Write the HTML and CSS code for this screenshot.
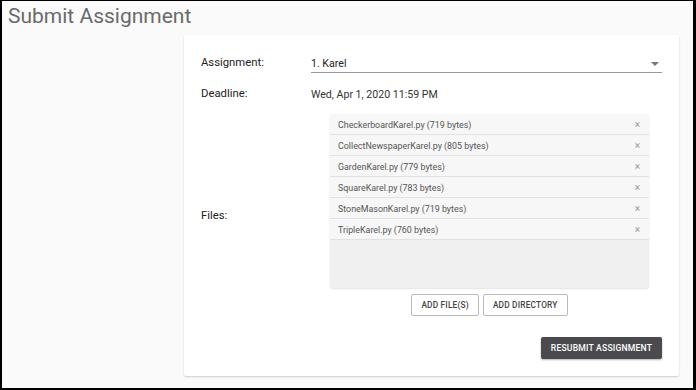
FILE: index.html
```html
<!DOCTYPE html>
<html>
<head>
  <link rel="stylesheet" href="styles.css">
</head>
<body>
<div class="frame">
  <h1 class="page-title">Submit Assignment</h1>

  <div class="card">
    <div class="form-row">
      <div class="label">Assignment:</div>
      <div class="select">
        <span>1. Karel</span>
        <span class="arrow"></span>
      </div>
    </div>

    <div class="form-row">
      <div class="label">Deadline:</div>
      <div class="value">Wed, Apr 1, 2020 11:59 PM</div>
    </div>

    <div class="form-row files-row">
      <div class="label">Files:</div>
      <div class="files">
        <div class="file-list">
          <div class="file-item"><span>CheckerboardKarel.py (719 bytes)</span><span class="remove">&times;</span></div>
          <div class="file-item"><span>CollectNewspaperKarel.py (805 bytes)</span><span class="remove">&times;</span></div>
          <div class="file-item"><span>GardenKarel.py (779 bytes)</span><span class="remove">&times;</span></div>
          <div class="file-item"><span>SquareKarel.py (783 bytes)</span><span class="remove">&times;</span></div>
          <div class="file-item"><span>StoneMasonKarel.py (719 bytes)</span><span class="remove">&times;</span></div>
          <div class="file-item"><span>TripleKarel.py (760 bytes)</span><span class="remove">&times;</span></div>
        </div>
        <div class="file-buttons">
          <button class="outline-button">Add file(s)</button>
          <button class="outline-button">Add directory</button>
        </div>
      </div>
    </div>

    <div class="actions">
      <button class="dark-button">Resubmit assignment</button>
    </div>
  </div>
</div>
</body>
</html>
```

FILE: styles.css
```css
/* reset */
* {
  margin: 0;
  padding: 0;
  box-sizing: border-box;
}

body {
  width: 696px;
  height: 390px;
  background-color: #000;
  font-family: Roboto, "Liberation Sans", sans-serif;
  color: #333;
}

/* light page inside the black screenshot edge */
.frame {
  margin: 1px 3px 2px 2px;
  height: 387px;
  background-color: #fafafa;
  overflow: hidden;
}

.page-title {
  font-size: 21px;
  font-weight: 400;
  color: #6a6a6a;
  line-height: 28px;
  padding: 1px 0 0 6px;
  height: 34px;
}

/* white card with the form */
.card {
  margin-left: 182px;
  width: 495px;
  background-color: #fff;
  padding: 17px;
  border-radius: 2px;
  box-shadow: 0 1px 2px rgba(0, 0, 0, 0.18);
}

.form-row {
  display: flex;
  align-items: center;
  min-height: 21px;
  margin-bottom: 10px;
}

.label {
  width: 110px;
  font-size: 11.3px;
  color: #222;
  flex-shrink: 0;
}

.value {
  font-size: 10.6px;
  color: #333;
  padding-top: 1px;
}

.select {
  flex: 1;
  height: 21px;
  display: flex;
  justify-content: space-between;
  align-items: flex-end;
  padding-bottom: 2px;
  font-size: 10.6px;
  color: #222;
  border-bottom: 1px solid #999;
}

.arrow {
  width: 0;
  height: 0;
  margin: 0 3px 4px 0;
  border-left: 4px solid transparent;
  border-right: 4px solid transparent;
  border-top: 4px solid #777;
}

/* file list */
.files-row {
  margin-bottom: 21px;
}

.files {
  flex: 1;
  padding: 0 13px 0 19px;
}

.file-list {
  height: 174px;
  background-color: #f0f0f0;
  border-radius: 3px;
  box-shadow: 0 1px 2px rgba(0, 0, 0, 0.12);
  overflow: hidden;
}

.file-item {
  height: 21px;
  display: flex;
  justify-content: space-between;
  align-items: center;
  padding: 1px 9px 0 8px;
  font-size: 8.9px;
  color: #555;
  background-color: #f7f7f7;
  border-bottom: 1px solid #e2e2e2;
}

.remove {
  font-size: 10px;
  color: #999;
}

.file-buttons {
  display: flex;
  justify-content: center;
  gap: 4px;
  margin-top: 6px;
}

.outline-button {
  height: 22px;
  padding: 0 9px;
  background-color: #fff;
  border: 1px solid #bbb;
  border-radius: 2px;
  font-family: Roboto, "Liberation Sans", sans-serif;
  font-size: 8.3px;
  font-weight: 500;
  letter-spacing: 0.2px;
  text-transform: uppercase;
  color: #444;
}

.actions {
  display: flex;
  justify-content: flex-end;
}

.dark-button {
  height: 22px;
  width: 121px;
  background-color: #4a4a4f;
  border: none;
  border-radius: 2px;
  box-shadow: 0 1px 2px rgba(0, 0, 0, 0.3);
  font-family: Roboto, "Liberation Sans", sans-serif;
  font-size: 8.6px;
  font-weight: 500;
  letter-spacing: 0.2px;
  text-transform: uppercase;
  color: #fff;
}
```
